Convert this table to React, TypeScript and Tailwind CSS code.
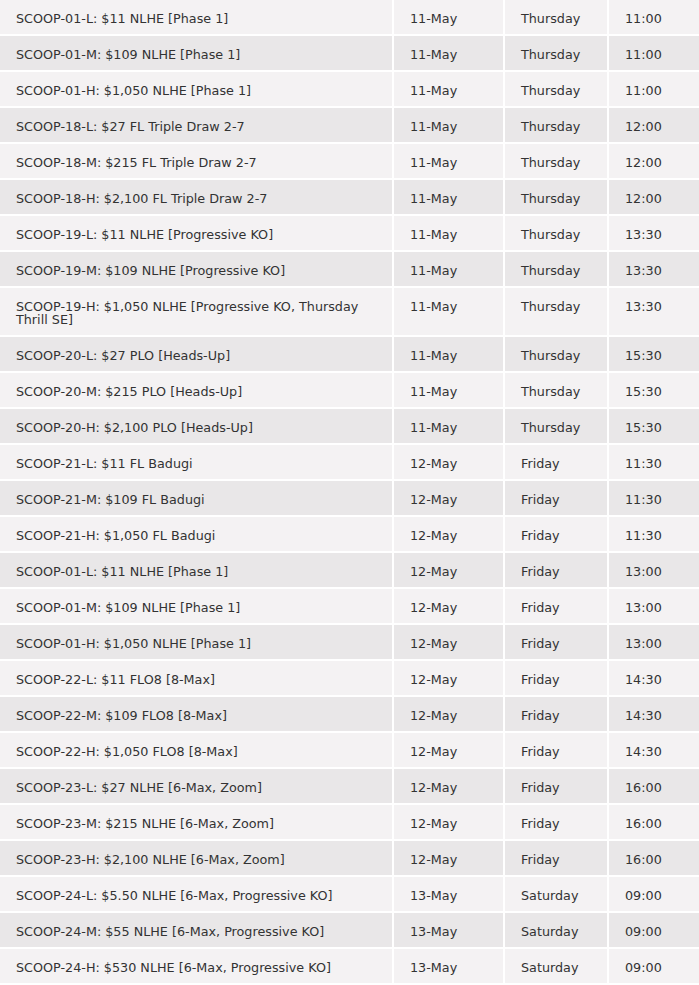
import React from 'react';

interface IEvent {
  name: string;
  date: string;
  day: string;
  time: string;
}

const events: IEvent[] = [
  { name: 'SCOOP-01-L: $11 NLHE [Phase 1]', date: '11-May', day: 'Thursday', time: '11:00' },
  { name: 'SCOOP-01-M: $109 NLHE [Phase 1]', date: '11-May', day: 'Thursday', time: '11:00' },
  { name: 'SCOOP-01-H: $1,050 NLHE [Phase 1]', date: '11-May', day: 'Thursday', time: '11:00' },
  { name: 'SCOOP-18-L: $27 FL Triple Draw 2-7', date: '11-May', day: 'Thursday', time: '12:00' },
  { name: 'SCOOP-18-M: $215 FL Triple Draw 2-7', date: '11-May', day: 'Thursday', time: '12:00' },
  { name: 'SCOOP-18-H: $2,100 FL Triple Draw 2-7', date: '11-May', day: 'Thursday', time: '12:00' },
  { name: 'SCOOP-19-L: $11 NLHE [Progressive KO]', date: '11-May', day: 'Thursday', time: '13:30' },
  { name: 'SCOOP-19-M: $109 NLHE [Progressive KO]', date: '11-May', day: 'Thursday', time: '13:30' },
  { name: 'SCOOP-19-H: $1,050 NLHE [Progressive KO, Thursday Thrill SE]', date: '11-May', day: 'Thursday', time: '13:30' },
  { name: 'SCOOP-20-L: $27 PLO [Heads-Up]', date: '11-May', day: 'Thursday', time: '15:30' },
  { name: 'SCOOP-20-M: $215 PLO [Heads-Up]', date: '11-May', day: 'Thursday', time: '15:30' },
  { name: 'SCOOP-20-H: $2,100 PLO [Heads-Up]', date: '11-May', day: 'Thursday', time: '15:30' },
  { name: 'SCOOP-21-L: $11 FL Badugi', date: '12-May', day: 'Friday', time: '11:30' },
  { name: 'SCOOP-21-M: $109 FL Badugi', date: '12-May', day: 'Friday', time: '11:30' },
  { name: 'SCOOP-21-H: $1,050 FL Badugi', date: '12-May', day: 'Friday', time: '11:30' },
  { name: 'SCOOP-01-L: $11 NLHE [Phase 1]', date: '12-May', day: 'Friday', time: '13:00' },
  { name: 'SCOOP-01-M: $109 NLHE [Phase 1]', date: '12-May', day: 'Friday', time: '13:00' },
  { name: 'SCOOP-01-H: $1,050 NLHE [Phase 1]', date: '12-May', day: 'Friday', time: '13:00' },
  { name: 'SCOOP-22-L: $11 FLO8 [8-Max]', date: '12-May', day: 'Friday', time: '14:30' },
  { name: 'SCOOP-22-M: $109 FLO8 [8-Max]', date: '12-May', day: 'Friday', time: '14:30' },
  { name: 'SCOOP-22-H: $1,050 FLO8 [8-Max]', date: '12-May', day: 'Friday', time: '14:30' },
  { name: 'SCOOP-23-L: $27 NLHE [6-Max, Zoom]', date: '12-May', day: 'Friday', time: '16:00' },
  { name: 'SCOOP-23-M: $215 NLHE [6-Max, Zoom]', date: '12-May', day: 'Friday', time: '16:00' },
  { name: 'SCOOP-23-H: $2,100 NLHE [6-Max, Zoom]', date: '12-May', day: 'Friday', time: '16:00' },
  { name: 'SCOOP-24-L: $5.50 NLHE [6-Max, Progressive KO]', date: '13-May', day: 'Saturday', time: '09:00' },
  { name: 'SCOOP-24-M: $55 NLHE [6-Max, Progressive KO]', date: '13-May', day: 'Saturday', time: '09:00' },
  { name: 'SCOOP-24-H: $530 NLHE [6-Max, Progressive KO]', date: '13-May', day: 'Saturday', time: '09:00' },
];

export const App: React.FunctionComponent = () => {
  const cell = 'px-4 pt-[12px] pb-[9px]';

  return (
    <div className="w-[699px] bg-white font-['DejaVu_Sans',Verdana,sans-serif] text-[12.75px] leading-[13px] text-[#333333]">
      <div className="grid grid-cols-[392px_109px_102px_1fr] gap-[2px]">
        {events.map((e, i) => {
          const bg = i % 2 === 0 ? 'bg-[#f4f2f3]' : 'bg-[#e9e7e8]';
          return (
            <React.Fragment key={i}>
              <div className={`${cell} ${bg}`}>{e.name}</div>
              <div className={`${cell} ${bg}`}>{e.date}</div>
              <div className={`${cell} ${bg}`}>{e.day}</div>
              <div className={`${cell} ${bg}`}>{e.time}</div>
            </React.Fragment>
          );
        })}
      </div>
    </div>
  );
}

export default App;
